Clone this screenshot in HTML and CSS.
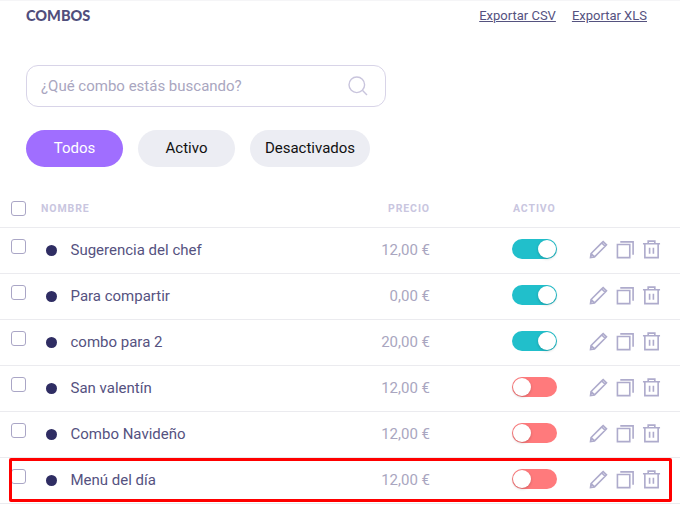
FILE: index.html
```html
<!DOCTYPE html>
<html lang="en">
<head>
    <meta charset="UTF-8">
    <meta name="viewport" content="width=device-width, initial-scale=1.0">
    <title>Combos</title>
    <link rel="stylesheet" href="styles.css">
</head>
<body>
    <svg class="icon-defs" width="0" height="0">
        <symbol id="icon-edit" viewBox="0 0 20 20">
            <path d="M2.2 14.2 13.4 3 14.9 1.6 18.4 5.1 17 6.6 5.8 17.8 1.6 18.4Z M13.4 3 17 6.6 M2.2 14.2 5.8 17.8"/>
        </symbol>
        <symbol id="icon-copy" viewBox="0 0 20 20">
            <path d="M1.5 4.8H14.5V18.5H1.5Z M4.5 2H18V15.5"/>
        </symbol>
        <symbol id="icon-trash" viewBox="0 0 20 20">
            <path d="M1 4H19 M6.5 4V1.2H13.5V4 M3 4V18.6H17V4 M8 8.2V14.6 M12 8.2V14.6"/>
        </symbol>
        <symbol id="icon-search" viewBox="0 0 20 20">
            <circle cx="8.8" cy="8.8" r="7.8"/>
            <path d="M14.6 14.6 19 19"/>
        </symbol>
    </svg>

    <div class="app-container">
        <header class="top-bar">
            <h1>COMBOS</h1>
            <nav class="export-links">
                <a href="#">Exportar CSV</a>
                <a href="#">Exportar XLS</a>
            </nav>
        </header>

        <div class="search-box">
            <span>¿Qué combo estás buscando?</span>
            <svg class="search-icon"><use href="#icon-search"/></svg>
        </div>

        <div class="filters">
            <button class="filter-btn active">Todos</button>
            <button class="filter-btn">Activo</button>
            <button class="filter-btn wide">Desactivados</button>
        </div>

        <section class="combo-list">
            <div class="combo-row list-head">
                <span class="checkbox"></span>
                <span class="col-name">NOMBRE</span>
                <span class="col-price">PRECIO</span>
                <span class="col-active">ACTIVO</span>
            </div>

            <div class="combo-row">
                <span class="checkbox"></span>
                <span class="dot"></span>
                <span class="col-name">Sugerencia del chef</span>
                <span class="col-price">12,00 €</span>
                <span class="toggle on"></span>
                <span class="actions">
                    <svg><use href="#icon-edit"/></svg><svg><use href="#icon-copy"/></svg><svg><use href="#icon-trash"/></svg>
                </span>
            </div>
            <div class="combo-row">
                <span class="checkbox"></span>
                <span class="dot"></span>
                <span class="col-name">Para compartir</span>
                <span class="col-price">0,00 €</span>
                <span class="toggle on"></span>
                <span class="actions">
                    <svg><use href="#icon-edit"/></svg><svg><use href="#icon-copy"/></svg><svg><use href="#icon-trash"/></svg>
                </span>
            </div>
            <div class="combo-row">
                <span class="checkbox"></span>
                <span class="dot"></span>
                <span class="col-name">combo para 2</span>
                <span class="col-price">20,00 €</span>
                <span class="toggle on"></span>
                <span class="actions">
                    <svg><use href="#icon-edit"/></svg><svg><use href="#icon-copy"/></svg><svg><use href="#icon-trash"/></svg>
                </span>
            </div>
            <div class="combo-row">
                <span class="checkbox"></span>
                <span class="dot"></span>
                <span class="col-name">San valentín</span>
                <span class="col-price">12,00 €</span>
                <span class="toggle off"></span>
                <span class="actions">
                    <svg><use href="#icon-edit"/></svg><svg><use href="#icon-copy"/></svg><svg><use href="#icon-trash"/></svg>
                </span>
            </div>
            <div class="combo-row">
                <span class="checkbox"></span>
                <span class="dot"></span>
                <span class="col-name">Combo Navideño</span>
                <span class="col-price">12,00 €</span>
                <span class="toggle off"></span>
                <span class="actions">
                    <svg><use href="#icon-edit"/></svg><svg><use href="#icon-copy"/></svg><svg><use href="#icon-trash"/></svg>
                </span>
            </div>
            <div class="combo-row highlighted">
                <span class="checkbox"></span>
                <span class="dot"></span>
                <span class="col-name">Menú del día</span>
                <span class="col-price">12,00 €</span>
                <span class="toggle off"></span>
                <span class="actions">
                    <svg><use href="#icon-edit"/></svg><svg><use href="#icon-copy"/></svg><svg><use href="#icon-trash"/></svg>
                </span>
            </div>
        </section>
    </div>
</body>
</html>
```

FILE: styles.css
```css
/* Reset and base styles */
* {
    margin: 0;
    padding: 0;
    box-sizing: border-box;
}

html,
body {
    height: 100%;
    overflow: hidden;
}

body {
    font-family: Roboto, Arial, sans-serif;
    background-color: white;
    color: #55527f;
}

.icon-defs {
    position: absolute;
}

.app-container {
    border-top: 1px solid #f5f5f7;
    min-height: 100%;
}

/* Top bar */
.top-bar {
    display: flex;
    justify-content: space-between;
    align-items: center;
    height: 29px;
    padding: 0 33px 0 26px;
}

.top-bar h1 {
    font-family: Lato, Arial, sans-serif;
    font-size: 14.5px;
    font-weight: 900;
    color: #514e7c;
}

.export-links {
    display: flex;
    gap: 16px;
}

.export-links a {
    font-size: 13px;
    color: #55527f;
}

/* Search */
.search-box {
    display: flex;
    justify-content: space-between;
    align-items: center;
    width: 360px;
    height: 42px;
    margin: 35px 0 0 26px;
    padding: 0 17px 0 14px;
    border: 1px solid #d8d4e8;
    border-radius: 12px;
    font-size: 15px;
    color: #a9a6c0;
}

.search-icon {
    width: 20px;
    height: 20px;
    fill: none;
    stroke: #c9c5dd;
    stroke-width: 1.4;
}

/* Filters */
.filters {
    display: flex;
    gap: 15px;
    margin: 23px 0 0 26px;
}

.filter-btn {
    width: 97px;
    height: 37px;
    padding-bottom: 2px;
    border: none;
    border-radius: 19px;
    background-color: #ecedf3;
    color: #111;
    font-family: Roboto, Arial, sans-serif;
    font-size: 15px;
}

.filter-btn.wide {
    width: 120px;
}

.filter-btn.active {
    background-color: #a06eff;
    color: white;
}

/* List */
.combo-list {
    margin-top: 22px;
}

.combo-row {
    position: relative;
    display: grid;
    grid-template-columns: 15px 31px 1fr 80px 82px 45px 123px;
    align-items: center;
    height: 46px;
    padding-left: 11px;
    border-bottom: 1px solid #ebebef;
    font-size: 15px;
}

.combo-row .checkbox {
    align-self: start;
    margin-top: 11px;
}

.checkbox {
    display: block;
    width: 15px;
    height: 15px;
    border: 1px solid #aaa6c6;
    border-radius: 3px;
    background-color: white;
}

.dot {
    justify-self: end;
    width: 11px;
    height: 11px;
    border-radius: 50%;
    background-color: #2f2d63;
}

.combo-row .col-name {
    padding: 0 0 2px 13.5px;
}

.col-price {
    grid-column: 4;
    justify-self: end;
    padding-bottom: 2px;
    color: #a9a6c0;
}

/* Header row */
.list-head {
    height: 39px;
    font-size: 10.5px;
    font-weight: 700;
    letter-spacing: 0.9px;
    color: #c9c6df;
}

.list-head .checkbox {
    align-self: center;
    margin-top: 0;
}

.combo-row.list-head .col-name {
    grid-column: 2 / 4;
    padding: 0 0 0 15px;
}

.list-head .col-price {
    padding-bottom: 0;
    color: #c9c6df;
}

.col-active {
    grid-column: 6;
    justify-self: start;
    white-space: nowrap;
    margin-left: 1px;
}

/* Toggle */
.toggle {
    grid-column: 6;
    position: relative;
    display: block;
    align-self: start;
    width: 45px;
    height: 20px;
    margin-top: 11px;
    border-radius: 10px;
}

.toggle::after {
    content: "";
    position: absolute;
    top: 1px;
    width: 18px;
    height: 18px;
    border-radius: 50%;
    background-color: white;
    box-shadow: 0 1px 3px rgba(0, 0, 0, 0.2);
}

.toggle.on {
    background-color: #21bfcb;
}

.toggle.on::after {
    right: 1px;
}

.toggle.off {
    background-color: #ff7a7c;
}

.toggle.off::after {
    left: 1px;
}

/* Row actions */
.actions {
    grid-column: 7;
    display: flex;
    gap: 7.5px;
    padding: 0 0 2px 32px;
}

.actions svg {
    flex: none;
    width: 19px;
    height: 19px;
    fill: none;
    stroke: #aeabcc;
    stroke-width: 1.7;
}

/* Red annotation round the last row */
.highlighted::after {
    content: "";
    position: absolute;
    left: 9px;
    top: 0;
    width: 663px;
    height: 44px;
    box-sizing: border-box;
    border: 3px solid #ff0000;
    border-radius: 2px;
}
```
